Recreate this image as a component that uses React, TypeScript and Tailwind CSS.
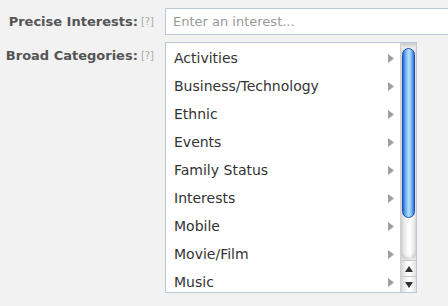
import React from "react";

const items = [
  "Activities",
  "Business/Technology",
  "Ethnic",
  "Events",
  "Family Status",
  "Interests",
  "Mobile",
  "Movie/Film",
  "Music",
];

function Arrow() {
  return (
    <svg width="6" height="9" viewBox="0 0 6 9" className="shrink-0">
      <path d="M0 0 L6 4.5 L0 9 Z" fill="#a0a0a0" />
    </svg>
  );
}

export default function App() {
  return (
    <div
      className="w-[448px] h-[306px] bg-[#f2f2f2] overflow-hidden relative"
      style={{ fontFamily: '"Lucida Grande", "DejaVu Sans", sans-serif' }}
    >
      <div className="flex items-start pt-[8px]">
        <div className="w-[165px] shrink-0 flex justify-end items-center h-[27px] pr-[11px]">
          <span className="text-[13px] font-bold text-[#555]">Precise Interests:</span>
          <span className="text-[10px] text-[#aaa] ml-[3px]">[?]</span>
        </div>
        <div className="flex-1 h-[27px] bg-white border border-[#bdc7d8] flex items-center pl-[7px] -mr-[10px]">
          <span className="text-[13px] text-[#999]">Enter an interest...</span>
        </div>
      </div>
      <div className="flex items-start pt-[7px]">
        <div className="w-[165px] shrink-0 flex justify-end items-center h-[27px] pr-[11px]">
          <span className="text-[13px] font-bold text-[#555]">Broad Categories:</span>
          <span className="text-[10px] text-[#aaa] ml-[3px]">[?]</span>
        </div>
        <div className="w-[252px] h-[251px] bg-white border border-[#bdc7d8] flex overflow-hidden">
          <div className="flex-1 flex flex-col pt-[1px] overflow-hidden">
            {items.map((it) => (
              <div key={it} className="h-[28px] shrink-0 flex items-center justify-between pl-[8px] pr-[6px]">
                <span className="text-[14px] text-[#333]">{it}</span>
                <Arrow />
              </div>
            ))}
          </div>
          <div className="w-[16px] shrink-0 flex flex-col border-l border-[#d0d0d0] bg-[linear-gradient(to_right,#d8d8d8,#f8f8f8_40%,#ffffff_60%,#e0e0e0)]">
            <div className="h-[5px] bg-[linear-gradient(to_bottom,#c8c8c8,#eeeeee)]" />
            <div className="h-[170px] mx-[1px] rounded-[7px] border border-[#1e4fb0] bg-[linear-gradient(to_right,#2a68d8,#7fbff5_30%,#b8e0ff_55%,#6fb3f0_80%,#2a68d8)]" />
            <div className="flex-1 rounded-b-[7px] shadow-[inset_0_-3px_3px_rgba(0,0,0,0.12)]" />
            <div className="h-[16px] flex items-center justify-center border-t border-[#c8c8c8]">
              <svg width="8" height="6" viewBox="0 0 8 6"><path d="M4 0 L8 6 L0 6 Z" fill="#333" /></svg>
            </div>
            <div className="h-[16px] flex items-center justify-center border-t border-[#c8c8c8]">
              <svg width="8" height="6" viewBox="0 0 8 6"><path d="M0 0 L8 0 L4 6 Z" fill="#333" /></svg>
            </div>
          </div>
        </div>
      </div>
    </div>
  );
}
